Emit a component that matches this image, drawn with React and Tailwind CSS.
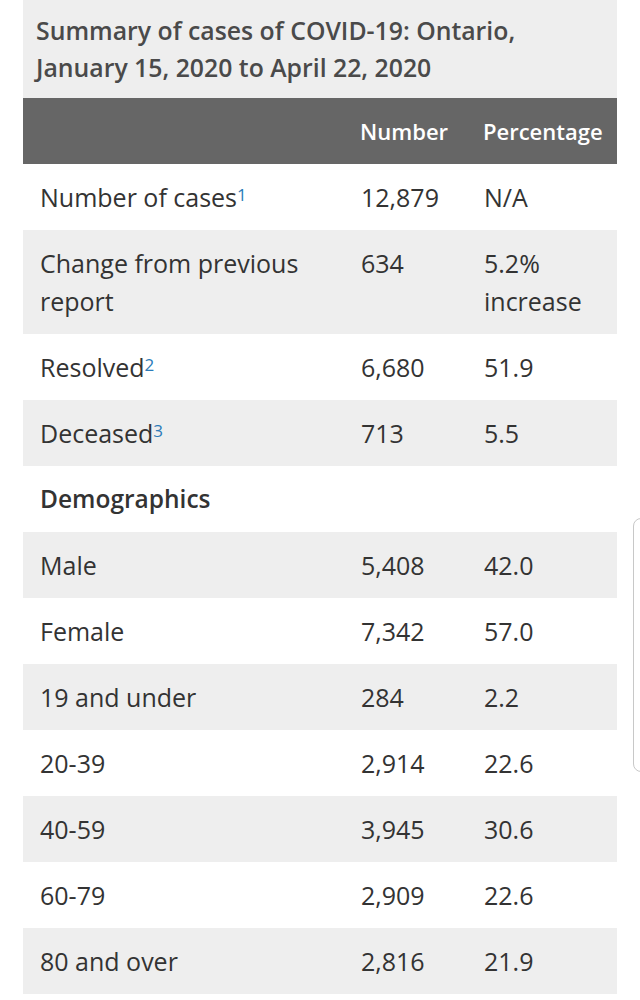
const rows = [
  { label: "Number of cases", sup: "1", number: "12,879", pct: "N/A" },
  { label: "Change from previous report", number: "634", pct: "5.2% increase" },
  { label: "Resolved", sup: "2", number: "6,680", pct: "51.9" },
  { label: "Deceased", sup: "3", number: "713", pct: "5.5" },
  { label: "Demographics", heading: true },
  { label: "Male", number: "5,408", pct: "42.0" },
  { label: "Female", number: "7,342", pct: "57.0" },
  { label: "19 and under", number: "284", pct: "2.2" },
  { label: "20-39", number: "2,914", pct: "22.6" },
  { label: "40-59", number: "3,945", pct: "30.6" },
  { label: "60-79", number: "2,909", pct: "22.6" },
  { label: "80 and over", number: "2,816", pct: "21.9" },
];

export default function App() {
  return (
    <div
      className="relative w-[640px] h-[1000px] bg-white overflow-hidden text-[#333]"
      style={{ fontFamily: '"Open Sans", sans-serif' }}
    >
      <div className="mx-[23px]">
        {/* Caption */}
        <div className="bg-[#eeeeee] pl-[13px] pr-2 pt-[12px] pb-[12px] text-[24.8px] leading-[37px] font-semibold text-[#4a4a4a] whitespace-nowrap">
          Summary of cases of COVID-19: Ontario,
          <br />
          January 15, 2020 to April 22, 2020
        </div>

        <table className="w-[594px] table-fixed border-collapse text-[25px] leading-[38px]">
          <colgroup>
            <col className="w-[321px]" />
            <col className="w-[123px]" />
            <col className="w-[150px]" />
          </colgroup>
          <thead>
            <tr className="bg-[#666666] text-white text-[22px]">
              <th className="h-[66px]"></th>
              <th className="pl-[16px] text-left font-semibold">Number</th>
              <th className="pl-[16px] text-left font-semibold">Percentage</th>
            </tr>
          </thead>
          <tbody>
            {rows.map((r, i) => (
              <tr key={i} className={i % 2 === 1 ? "bg-[#eeeeee]" : "bg-white"}>
                <td
                  className={`pl-[17px] pr-[10px] py-[14px] align-top ${r.heading ? "font-semibold text-[24.5px]" : ""}`}
                >
                  {r.label}
                  {r.sup && (
                    <sup className="text-[17px] text-[#2b7bb9] relative -top-[6px]">{r.sup}</sup>
                  )}
                </td>
                <td className="pl-[17px] py-[14px] align-top">{r.number}</td>
                <td className="pl-[17px] pr-[10px] py-[14px] align-top">{r.pct}</td>
              </tr>
            ))}
          </tbody>
        </table>
      </div>

      {/* edge panel handle */}
      <div className="absolute left-[633px] top-[518px] w-[20px] h-[254px] rounded-l-[8px] border border-[#c8c8c8] bg-white"></div>
    </div>
  );
}
